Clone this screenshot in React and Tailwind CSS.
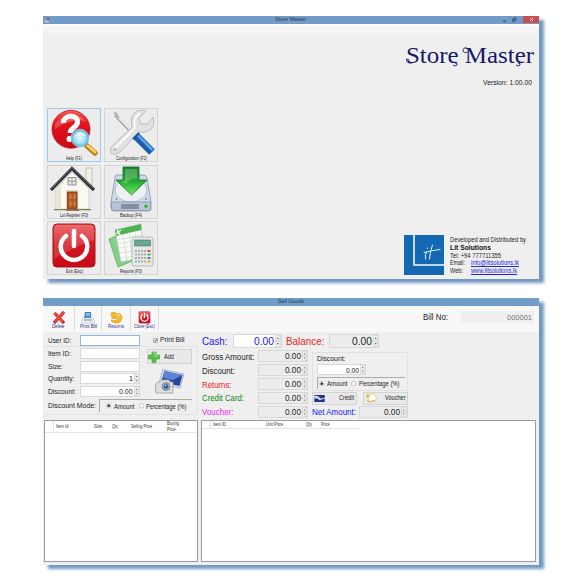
import { useLayoutEffect, useRef, useState } from "react";

// A single line of text, condensed or widened to fill the width of its box.
function T({ className = "", link = false, children }) {
  const box = useRef(null);
  const inner = useRef(null);
  const [scale, setScale] = useState(1);
  useLayoutEffect(() => {
    const range = document.createRange();
    range.selectNodeContents(inner.current);
    const natural = range.getBoundingClientRect().width;
    if (natural) setScale(box.current.getBoundingClientRect().width / natural);
  }, []);
  return (
    <span ref={box} className={"block shrink-0 whitespace-nowrap leading-none " + className}>
      <span ref={inner} className={"inline-block origin-left align-top " + (link ? "text-[#2525e8] underline" : "")} style={{ transform: `scaleX(${scale})` }}>
        {children}
      </span>
    </span>
  );
}

function HelpIcon() {
  return (
    <svg viewBox="0 0 50 48" className="h-[48px] w-[50px]">
      <defs>
        <linearGradient id="red" x1="0" y1="0" x2="0" y2="1"><stop offset="0" stopColor="#f0605c" /><stop offset=".35" stopColor="#e2141c" /><stop offset="1" stopColor="#c80a14" /></linearGradient>
        <radialGradient id="lens"><stop offset="0" stopColor="#e9fbff" /><stop offset=".7" stopColor="#9bd9f2" /><stop offset="1" stopColor="#4ba8d2" /></radialGradient>
      </defs>
      <circle cx="22" cy="20.3" r="19" fill="url(#red)" stroke="#b80f18" strokeWidth=".7" />
      <path d="M6 15Q20-2 37 12Q22 9 6 20Z" fill="#fff" opacity=".22" />
      <path d="M14.5 14C14 5.500 29 5 28.500 13C28.500 18.500 21.500 18.500 21 24" fill="none" stroke="#fff" strokeWidth="5" />
      <circle cx="20.500" cy="30" r="3" fill="#fff" />
      <path d="M38 37L46 44" stroke="#b78322" strokeWidth="5.5" strokeLinecap="round" />
      <path d="M39 37L46 43" stroke="#ffd45c" strokeWidth="2.8" strokeLinecap="round" />
      <circle cx="31" cy="29" r="8.8" fill="url(#lens)" stroke="#8cc5de" />
      <path d="M25 28Q31 19 37 27Q31 25 25 28" fill="#fff" opacity=".8" />
    </svg>
  );
}

function ToolsIcon() {
  return (
    <svg viewBox="0 0 50 48" className="h-[48px] w-[50px]">
      <path d="M9 6L29 27" stroke="#9ca0a3" strokeWidth="2.6" />
      <path d="M9 5L28 25" stroke="#f4f5f6" strokeWidth="1.2" />
      <path d="M7 2L11 4L14 9L10 8Z" fill="#b2b6b8" />
      <path d="M6 37L26 18Q23 7 31 2Q36 0 40 2L33 9L35 15L41 15L47 8Q50 18 42 22Q38 24 33 23L14 43Q9 47 5 44Q3 40 6 37Z" fill="#dfe1e2" stroke="#b0b3b5" strokeWidth=".8" />
      <path d="M8 40L29 19Q26 9 34 4" fill="none" stroke="#fafafa" strokeWidth="2" />
      <circle cx="9" cy="40.500" r="1.5" fill="#b8bbbd" />
      <path d="M30 27L46 43" stroke="#1b5eaa" strokeWidth="8" />
      <path d="M31.500 26L46.500 41" stroke="#5ca5e9" strokeWidth="2.5" />
      <path d="M27 30L33 24" stroke="#155091" strokeWidth="2" />
    </svg>
  );
}

function HouseIcon() {
  return (
    <svg viewBox="0 0 50 48" className="h-[48px] w-[50px]">
      <path d="M37 2H43V20H37Z" fill="#f2efe6" stroke="#b9b5a8" strokeWidth=".8" />
      <path d="M7 23L23 6L40 23V43H7Z" fill="#fbf9f2" stroke="#c5c0b3" strokeWidth=".7" />
      <path d="M7 23V43H12V18Z" fill="#e9e5d8" />
      <path d="M2 24L23 2.500L45 24" fill="none" stroke="#303438" strokeWidth="3.2" />
      <path d="M3 22L23 1.5L44 22" fill="none" stroke="#777c80" strokeWidth=".8" />
      <path d="M19 11.500H27V19H19Z" fill="#e4ebe8" stroke="#777" strokeWidth=".8" />
      <path d="M23 11.500V19M19 15.200H27" stroke="#888" strokeWidth=".7" />
      <path d="M17 24H29V43H17Z" fill="#e2d4bd" />
      <path d="M18.500 26H28V43H18.500Z" fill="#b0561f" stroke="#7a3510" strokeWidth=".8" />
      <path d="M20.500 28H22.500V33H20.500ZM24.500 28H26.500V33H24.500ZM20.500 35H22.500V40H20.500ZM24.500 35H26.500V40H24.500Z" fill="#d28447" />
      <path d="M5 43.700H18M29 43.700H42" stroke="#6e8c4c" strokeWidth="1.3" />
      <path d="M17 44H30" stroke="#8c6749" strokeWidth="1.8" />
    </svg>
  );
}

function BackupIcon() {
  return (
    <svg viewBox="0 0 50 48" className="h-[48px] w-[50px]">
      <defs><linearGradient id="grn" x1="0" y1="0" x2="0" y2="1"><stop stopColor="#17812a" /><stop offset=".5" stopColor="#22a934" /><stop offset="1" stopColor="#70ea60" /></linearGradient></defs>
      <path d="M11 9H38Q40 9 41 12L45 36V43Q45 45 42 45H8Q5 45 5 42V36L9 12Q9 9 11 9Z" fill="#d0d9e6" stroke="#8390a8" strokeWidth=".8" />
      <ellipse cx="25" cy="24" rx="16" ry="12" fill="#edf1f6" stroke="#b2bdce" />
      <path d="M5.500 36H44.500V43Q44 44.500 42 44.500H8Q5.500 44.500 5.500 42Z" fill="#b9c4d6" stroke="#8491ab" strokeWidth=".7" />
      <path d="M16 38V43M18 38V43M20 38V43M22 38V43M24 38V43M26 38V43M28 38V43M30 38V43M32 38V43" stroke="#4f5a70" />
      <circle cx="40" cy="40.300" r="1.7" fill="#31b734" />
      <circle cx="10.500" cy="33" r="1" fill="#8591a8" /><circle cx="40" cy="33" r="1" fill="#8591a8" />
      <path d="M17 1H33V14H41L25.500 29L10 14H17Z" fill="url(#grn)" stroke="#11751f" strokeWidth=".8" />
      <path d="M19 3H31V12Q24 12 20 18L15 15H19Z" fill="#fff" opacity=".22" />
    </svg>
  );
}

function PowerIcon({ className }) {
  return (
    <svg viewBox="0 0 48 48" className={className}>
      <defs><linearGradient id="pow" x1="0" y1="0" x2="0" y2="1"><stop stopColor="#e85053" /><stop offset=".5" stopColor="#d41620" /><stop offset="1" stopColor="#c80a16" /></linearGradient></defs>
      <rect x="3" y="2" width="42" height="43" rx="4" fill="url(#pow)" stroke="#a8131b" />
      <path d="M4 6Q5 3 9 3H40Q44 3 44 7V18Q28 23 4 37Z" fill="#fff" opacity=".15" />
      <path d="M16 14A13.300 13.300 0 1 0 32 14" fill="none" stroke="#fff" strokeWidth="4.5" strokeLinecap="round" />
      <path d="M24 9V24" stroke="#fff" strokeWidth="4.5" strokeLinecap="round" />
    </svg>
  );
}

function ReportsIcon() {
  return (
    <svg viewBox="0 0 50 48" className="h-[48px] w-[50px]">
      <path d="M3 17L20 10L31 37L12 45Z" fill="#86cf88" stroke="#58ad5c" strokeWidth=".8" />
      <path d="M9 8L35 2L37 35L15 40Z" fill="#fafcf9" stroke="#b4c4b3" strokeWidth=".7" />
      <path d="M9 8L35 2L35.500 8L10 14Z" fill="#4fb355" />
      <path d="M10 18L36 13M11 22L36 18M12 26L36 23M13 31L36 28M14 36L37 33M17 12L21 39M23 10L27 38M29 9L33 37" stroke="#d2dbd1" strokeWidth=".8" />
      <path d="M11 8L14 13M15 8L10 12" stroke="#dfffdc" strokeWidth="1.5" />
      <rect x="26" y="15" width="21" height="29" rx="2" fill="#e6e9e8" stroke="#a9b1af" strokeWidth=".8" />
      <rect x="28.500" y="18" width="16" height="6" fill="#6aa893" stroke="#467e70" strokeWidth=".6" />
      <path d="M29 29H40M29 32.500H40M29 36H40M29 39.500H40" stroke="#a5adad" strokeWidth="2" strokeDasharray="2 1" />
      <path d="M41.500 28H44.500V30H41.500Z" fill="#de4546" /><path d="M41.500 31.500H44.500V33.500H41.500Z" fill="#4fb056" /><path d="M41.500 35H44.500V37H41.500Z" fill="#4186d2" /><path d="M41.500 38.500H44.500V40.500H41.500Z" fill="#eba42a" />
    </svg>
  );
}

function Tile({ icon, label, width, active }) {
  return (
    <div className={"flex h-[54px] w-[54px] flex-col items-center border bg-[#ececec] " + (active ? "border-[#9cc9ee]" : "border-[#d4d4d4]")}>
      <div className="flex h-[48px] shrink-0 justify-center">{icon}</div>
      <T className={"-mt-px text-[5.6px] text-[#222] " + width}>{label}</T>
    </div>
  );
}

function LitLogo() {
  return (
    <svg viewBox="0 0 40 40" className="h-[40px] w-[40px] shrink-0">
      <rect width="40" height="40" fill="#1268b1" />
      <path d="M10 0V30H40" fill="none" stroke="#f4f8fb" strokeWidth="1.6" />
      <path d="M22.500 17Q20.500 19 21.500 24M23.500 13.500L23.600 13M28.500 10Q26 16 25.500 24M20 17.500Q28 15.500 36 14.500" fill="none" stroke="#e2effa" strokeWidth="1" strokeLinecap="round" />
    </svg>
  );
}

function TitleBar({ children }) {
  return <div className="flex h-[8px] shrink-0 items-center bg-[#719cc8]">{children}</div>;
}

// Title lettering with the swashes of its display face drawn over it.
function StoreMaster() {
  return (
    <div className="relative w-[128px] text-[#17176b]">
      <T className="w-[128px] font-['Liberation_Serif',serif] text-[24px]">Store Master</T>
      <svg viewBox="0 0 128 24" className="absolute left-0 top-0 h-[24px] w-[128px]" fill="none" stroke="currentColor" strokeWidth=".9">
        <path d="M2 17Q-1 14 1 18.500Q3 21 6 20M49 20Q52 20 51 22Q49 24 47 22M61 5Q57 4 57 8Q58 11 61 9M112 20Q115 20 114 22Q112 24 110 22" />
      </svg>
    </div>
  );
}

function StoreWindow() {
  return (
    <section className="flex h-[263px] w-[496px] flex-col bg-[#efefef] shadow-[5px_4px_3px_0_#7298c2]">
      <TitleBar>
        <svg viewBox="0 0 8 8" className="ml-px h-[7px] w-[7px]"><path d="M1 4H5V6H1Z" fill="#d3dbec" /><path d="M4 1H6V3H4Z" fill="#a82945" /><path d="M3 5L5 3" stroke="#b35b75" /></svg>
        <T className="ml-[224px] w-[31px] text-[5.8px] text-[#26384c]">Store Master</T>
        <div className="ml-auto flex h-full items-start">
          <svg viewBox="0 0 24 8" className="h-[8px] w-[24px]"><path d="M4 5.200H7" stroke="#233d59" /><path d="M13.500 3.500H16V5.500H13.500ZM14.500 3V2H17V4.500" fill="none" stroke="#233d59" strokeWidth=".7" /></svg>
          <svg viewBox="0 0 16 7" className="h-[7px] w-[16px] bg-[#c94f50]"><path d="M7 2L10 5M10 2L7 5" stroke="#fff" strokeWidth=".8" /></svg>
        </div>
      </TitleBar>
      <div className="h-[2px] shrink-0 bg-[#fdfdfd]" />
      <div className="h-[7px] shrink-0 bg-[#f5f5f5]" />
      <div className="flex grow flex-col justify-between">
        <div className="flex flex-col items-end pt-[10px]">
          <div className="mr-[5px]"><StoreMaster /></div>
          <T className="mr-[7px] mt-[12px] w-[49px] text-[7.6px] text-[#151515]">Version: 1.00.00</T>
        </div>
        <div className="flex items-end justify-between pb-[4px] pl-[4px]">
          <div className="grid grid-cols-[54px_54px] gap-x-[3px] gap-y-[2.5px]">
            <Tile active icon={<HelpIcon />} label="Help (F1)" width="w-[16px]" />
            <Tile icon={<ToolsIcon />} label="Configuration (F2)" width="w-[31px]" />
            <Tile icon={<HouseIcon />} label="Lot Register (F3)" width="w-[28px]" />
            <Tile icon={<BackupIcon />} label="Backup (F4)" width="w-[22px]" />
            <Tile icon={<PowerIcon className="h-[48px] w-[48px]" />} label="Exit (Esc)" width="w-[17px]" />
            <Tile icon={<ReportsIcon />} label="Reports (F5)" width="w-[22px]" />
          </div>
          <div className="flex w-[135px] gap-[6px] text-[6.8px] text-[#252525]">
            <LitLogo />
            <div className="flex flex-col gap-[1px] pt-[2px]">
              <T className="w-[76px]">Developed and Distributed by</T>
              <T className="w-[41px] text-[7.3px] font-bold text-[#111]">Lit Solutions</T>
              <T className="w-[51px]">Tel: +94 777711355</T>
              <div className="flex"><T className="w-[15px]">Email:</T><T link className="ml-[6px] w-[48px]">info@litsolutions.lk</T></div>
              <div className="flex"><T className="w-[13px]">Web:</T><T link className="ml-[8px] w-[46px]">www.litsolutions.lk</T></div>
            </div>
          </div>
        </div>
      </div>
    </section>
  );
}

function Spin() {
  return (
    <svg viewBox="0 0 6 12" preserveAspectRatio="none" className="h-full w-[5.5px] shrink-0 bg-[#e6e6e6]">
      <path d="M.5 .5H5.500V5.500H.5ZM.5 6.500H5.500V11.500H.5Z" fill="#f1f1f1" stroke="#cecece" strokeWidth=".6" />
      <path d="M2 4L3 2.300L4 4ZM2 8L3 9.700L4 8Z" fill="#555" />
    </svg>
  );
}

function Field({ className, value, valueClass = "", spin = true }) {
  return (
    <div className={"flex shrink-0 items-center justify-end border border-[#d8d8d8] " + className}>
      {value && <T className={"mr-[1px] pt-[.5px] " + valueClass}>{value}</T>}
      {spin && <Spin />}
    </div>
  );
}

function Radio({ on }) {
  return (
    <svg viewBox="0 0 6 6" className="h-[5.5px] w-[5.5px] shrink-0"><circle cx="3" cy="3" r="2.5" fill="#fff" stroke="#999" strokeWidth=".6" />{on && <circle cx="3" cy="3" r="1.4" fill="#222" />}</svg>
  );
}

function ToolButton({ icon, label, box, width }) {
  return (
    <div className={"flex h-[25px] shrink-0 flex-col items-center justify-between border-r border-[#dcdce4] pb-[1.500px] pt-[4.500px] " + box}>
      {icon}
      <T className={"text-[5.4px] text-[#2c2c80] " + width}>{label}</T>
    </div>
  );
}

function Toolbar() {
  return (
    <div className="flex h-[26px] shrink-0 justify-between bg-[#f8f8f8]">
      <div className="flex">
        <ToolButton box="w-[32px]" width="w-[12.5px]" label="Delete" icon={<svg viewBox="0 0 14 13" className="h-[13px] w-[14px]"><path d="M2.500 2L12 12M12 1L2 12" stroke="#b9241f" strokeWidth="3.2" /><path d="M2.500 2L11 11M12 1L3 11" stroke="#f24540" strokeWidth="2.1" /></svg>} />
        <ToolButton box="w-[27px]" width="w-[17px]" label="Print Bill" icon={<svg viewBox="0 0 14 13" className="h-[13px] w-[14px]"><path d="M4 1H10V7H3Z" fill="#3d83cb" /><path d="M5 2H9V5H4.500Z" fill="#7ebcec" /><path d="M2 7H12L13.500 9.500V12H.5V9.500Z" fill="#eef0f3" stroke="#b5bcc6" strokeWidth=".6" /><path d="M3 9H11" stroke="#6b7683" strokeWidth=".9" /></svg>} />
        <ToolButton box="w-[29px]" width="w-[16px]" label="Returns" icon={<svg viewBox="0 0 14 13" className="h-[13px] w-[14px]"><path d="M2 2L6 1L6.500 3Q12 1 13 6Q13 12 7 12Q3 12 2 9Q8 11 9.500 7Q9 5 7 6L7.500 8L3 7Z" fill="#f8b71c" stroke="#dc8d12" strokeWidth=".6" /><path d="M7 4Q11 3 11.500 6" stroke="#ffe983" fill="none" /></svg>} />
        <ToolButton box="w-[28px]" width="w-[21px]" label="Close (Esc)" icon={<PowerIcon className="h-[13px] w-[13px]" />} />
      </div>
      <div className="flex h-[22px] items-center pr-[5px]">
        <T className="w-[25px] text-[8.4px] text-[#222]">Bill No:</T>
        <div className="ml-[13px] flex h-[12px] w-[73px] items-center justify-end bg-[#efefef] pr-[2px]">
          <T className="w-[25px] pt-[.5px] text-[7.5px] text-[#777]">000001</T>
        </div>
      </div>
    </div>
  );
}

function ModeRadios({ className, gap }) {
  return (
    <div className={"flex items-center border-l border-t border-[#aaa] pt-[.5px] text-[7px] text-[#222] " + className}>
      <Radio on />
      <T className="ml-[2px] w-[20.500px]">Amount</T>
      <div className={gap}><Radio /></div>
      <T className="ml-[2px] w-[40.500px]">Percentage (%)</T>
    </div>
  );
}

function FormRow({ label, width, value, valueClass, spin }) {
  return (
    <div className="flex h-[12.7px] items-center">
      <div className="w-[32px] pt-[1.500px]"><T className={"text-[8px] text-[#222] " + width}>{label}</T></div>
      <Field className="h-[11px] w-[60px] bg-white" value={value} valueClass={"text-[8px] text-[#222] " + valueClass} spin={spin} />
    </div>
  );
}

function ItemForm() {
  return (
    <div className="w-[155px] shrink-0">
      <div className="flex h-[14px] items-center pl-[5px] pt-[2px]">
        <div className="w-[32px] pt-[1px]"><T className="w-[23.500px] text-[8px] text-[#222]">User ID:</T></div>
        <div className="h-[11px] w-[60px] border border-[#89b8e5] bg-white" />
        <svg viewBox="0 0 5 5" className="ml-[13px] h-[5px] w-[5px]"><path d="M.5 .5H4.500V4.500H.5Z" fill="#fff" stroke="#888" strokeWidth=".6" /><path d="M1.200 2.500L2.200 3.500L4 1.200" fill="none" stroke="#111" strokeWidth=".8" /></svg>
        <T className="ml-[2px] w-[24.500px] text-[7.5px] text-[#222]">Print Bill</T>
      </div>
      <div className="h-[69px] border border-l-0 border-[#e2e2e2] pl-[5px]">
        <div className="flex">
          <div>
            <FormRow label="Item ID:" width="w-[23px]" spin={false} />
            <FormRow label="Size:" width="w-[15px]" spin={false} />
            <FormRow label="Quantity:" width="w-[26.500px]" value="1" valueClass="w-[4px]" />
            <FormRow label="Discount:" width="w-[28px]" value="0.00" valueClass="w-[13.5px]" />
          </div>
          <div className="flex w-[59px] flex-col items-start pt-[2px]">
            <div className="ml-[7px] flex h-[15px] w-[45px] items-center border border-[#d2d2d2] bg-[#e9e9e9]">
              <svg viewBox="0 0 12 12" className="h-[12px] w-[12px]"><path d="M4 1H8V4H11.500V8H8V11.500H4V8H.5V4H4Z" fill="#55c043" stroke="#38a02f" strokeWidth=".6" /><path d="M5 2H7V5H10" fill="none" stroke="#a1ec83" /></svg>
              <T className="ml-[3.500px] w-[10px] pt-[.5px] text-[6.5px] text-[#222]">Add</T>
            </div>
            <svg viewBox="0 0 30 25" className="ml-[15px] mt-[5px] h-[25px] w-[30px]">
              <path d="M8 .5L29 5L25 19L4 14Z" fill="#e3e8f2" stroke="#8b97ad" strokeWidth=".7" />
              <path d="M9.500 2L27.500 6L24.500 17L6 13Z" fill="#25469c" />
              <path d="M9.500 2L27.500 6L18 11L8 9Z" fill="#5d84d2" />
              <path d="M.5 15L3 13H5L7 11H14L15 13H18V24H1Z" fill="#dcdedf" stroke="#999fa6" strokeWidth=".8" />
              <circle cx="11" cy="17.500" r="4" fill="#a5aab2" stroke="#737881" strokeWidth=".8" /><circle cx="11" cy="17.500" r="2.3" fill="#265ba4" /><circle cx="10.400" cy="16.700" r=".8" fill="#bde2ff" />
            </svg>
          </div>
        </div>
        <div className="flex h-[15px] items-center">
          <T className="w-[48px] pt-[.5px] text-[8px] text-[#222]">Discount Mode:</T>
          <ModeRadios className="ml-[3px] h-[12.5px] w-[93px] pl-[6px]" gap="ml-[4.500px]" />
        </div>
      </div>
    </div>
  );
}

function AmountRow({ label, className }) {
  return (
    <div className="flex h-[13.9px] items-center">
      <div className="w-[56px] pt-[1.200px]"><T className={"text-[8.5px] " + className}>{label}</T></div>
      <Field className="h-[12px] w-[50px] bg-[#ececec]" value="0.00" valueClass="w-[16px] text-[8.5px] text-[#222]" />
    </div>
  );
}

function PayButton({ icon, label, width }) {
  return (
    <div className="flex h-[12.5px] w-[45px] items-center justify-between border border-[#d2d2d2] bg-[#e9e9e9] pl-[1px] pr-[2px]">
      {icon}
      <T className={"pt-[.5px] text-[6.5px] text-[#222] " + width}>{label}</T>
    </div>
  );
}

function Payment() {
  return (
    <div className="pl-[4px] pt-[2px]">
      <div className="flex h-[14px] items-center">
        <T className="w-[25.5px] pt-[.5px] text-[10.5px] text-[#1515f4]">Cash:</T>
        <Field className="ml-[5px] h-[14px] w-[49px] bg-white" value="0.00" valueClass="w-[20px] text-[10.5px] text-[#1515f4]" />
        <T className="ml-[4px] w-[38.5px] pt-[.5px] text-[10.5px] text-[#f22020]">Balance:</T>
        <Field className="ml-[5px] h-[14px] w-[50px] bg-[#ececec]" value="0.00" valueClass="w-[20px] text-[10.5px] text-[#222]" />
      </div>
      <div className="flex pt-[1.5px]">
        <div className="w-[110px]">
          <AmountRow label="Gross Amount:" className="w-[52.500px] text-[#222]" />
          <AmountRow label="Discount:" className="w-[33px] text-[#222]" />
          <AmountRow label="Returns:" className="w-[29.500px] text-[#f22020]" />
          <AmountRow label="Credit Card:" className="w-[42px] text-[#128512]" />
          <AmountRow label="Voucher:" className="w-[31.500px] text-[#ef20ef]" />
        </div>
        <div className="pt-[2.5px]">
          <div className="flex h-[39px] w-[96px] flex-col border border-[#e1e1e1] pl-[4px]">
            <T className="mt-[2px] w-[28.500px] text-[7.4px] text-[#222]">Discount:</T>
            <Field className="mt-[2px] h-[11px] w-[49px] bg-white" value="0.00" valueClass="w-[13px] text-[7px] text-[#222]" />
            <ModeRadios className="mt-[1.5px] h-[12px] w-[88px] pl-px" gap="ml-[4px]" />
          </div>
          <div className="mt-[1px] flex gap-[6px]">
            <PayButton label="Credit" width="w-[15px]" icon={<svg viewBox="0 0 12 8" className="h-[7px] w-[11px]"><path d="M0 0H12V8H0Z" fill="#23318d" /><path d="M0 1Q5 0 7 4L12 3V4L6 6Q4 3 0 4Z" fill="#d5e2f9" /></svg>} />
            <PayButton label="Voucher" width="w-[20.500px]" icon={<svg viewBox="0 0 14 11" className="h-[10px] w-[13px]"><path d="M2 3L10 1L13 7L5 10Z" fill="#fffef2" stroke="#dfc382" strokeWidth=".7" /><path d="M1 2L4 1L5 4L2 6Z" fill="#f3b83c" /><path d="M2 8L5 10L11 8" fill="none" stroke="#e8a53a" /></svg>} />
          </div>
          <div className="mt-[1.5px] flex items-center">
            <T className="w-[44px] pt-[.5px] text-[8.5px] text-[#1515f4]">Net Amount:</T>
            <Field className="ml-[2.5px] h-[12px] w-[49px] bg-[#ececec]" value="0.00" valueClass="w-[16px] text-[8.5px] text-[#222]" />
          </div>
        </div>
      </div>
    </div>
  );
}

function Tables() {
  return (
    <div className="flex h-[142px] shrink-0 gap-[3.5px] pl-px text-[5.2px] text-[#333]">
      <div className="w-[153.5px] border border-[#9b9b9b] bg-white">
        <div className="flex h-[12px] items-center border-b border-[#e3e3e3]">
          <div className="h-full w-[9px] border-r border-[#e3e3e3]" />
          <T className="ml-[2px] w-[12.500px]">Item Id</T>
          <T className="ml-[25.500px] w-[8px]">Size</T>
          <T className="ml-[10px] w-[6px]">Qty</T>
          <T className="ml-[13px] w-[21px]">Selling Price</T>
          <div className="ml-[15px]"><T className="w-[12px]">Buying</T><T className="w-[8.5px]">Price</T></div>
        </div>
      </div>
      <div className="w-[335px] border border-[#9b9b9b] bg-white">
        <div className="flex h-[8px] w-[157px] items-center border-b border-[#e3e3e3]">
          <div className="h-full w-[9px] border-r border-[#e3e3e3]" />
          <T className="ml-[2px] w-[13px]">Item ID</T>
          <T className="ml-[40px] w-[17px]">Unit Price</T>
          <T className="ml-[23px] w-[6px]">Qty</T>
          <T className="ml-[8.5px] w-[8.5px]">Price</T>
        </div>
      </div>
    </div>
  );
}

function SellWindow() {
  return (
    <section className="flex h-[267px] w-[496px] flex-col bg-[#efefef] shadow-[5px_4px_3px_0_#7298c2]">
      <TitleBar><T className="ml-[235px] w-[26px] text-[5.8px] text-[#26384c]">Sell Goods</T></TitleBar>
      <Toolbar />
      <div className="flex h-[88px] shrink-0"><ItemForm /><Payment /></div>
      <Tables />
    </section>
  );
}

export default function App() {
  return (
    <main className="flex h-[580px] w-[580px] flex-col gap-[19px] overflow-hidden bg-white pl-[43px] pt-[16px] font-['Liberation_Sans',Arial,sans-serif]">
      <StoreWindow />
      <SellWindow />
    </main>
  );
}
